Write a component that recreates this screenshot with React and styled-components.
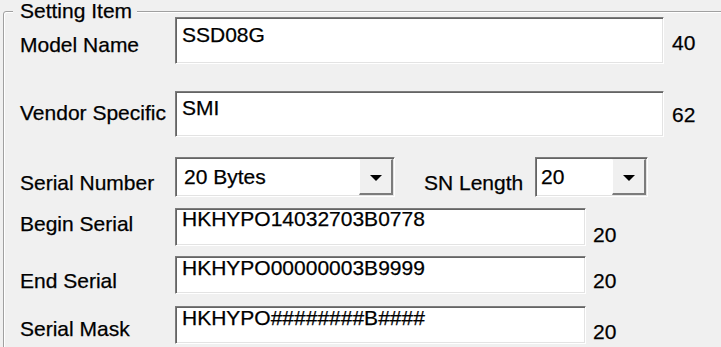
import React from "react";
import styled, { createGlobalStyle } from "styled-components";

const GlobalStyle = createGlobalStyle`
  html, body {
    margin: 0;
    padding: 0;
    background: #f0f0f0;
    overflow: hidden;
  }
  body {
    font-family: "Liberation Sans", Arial, sans-serif;
    font-size: 21px;
    color: #000;
    -webkit-text-stroke: 0.25px #000;
  }
`;

const Page = styled.div`
  width: 721px;
  height: 347px;
  overflow: hidden;
  background: #f0f0f0;
`;

const GroupBox = styled.section`
  position: relative;
  width: 760px;
  height: 360px;
  margin: 11px 0 0 3px;
  border: 1px solid #a0a0a0;
  border-radius: 3px;
  box-shadow: inset 1px 1px 0 #ffffff;
  padding: 5px 0 0 16px;
  box-sizing: border-box;
`;

// caption sits over the group box line
const Caption = styled.span`
  position: absolute;
  top: -13px;
  left: 9px;
  padding: 0 5px 0 7px;
  line-height: 24px;
  background: #f0f0f0;
  white-space: nowrap;
`;

const Row = styled.div`
  display: flex;
  align-items: flex-start;
  margin-top: ${(p) => p.$gap || 0}px;
`;

const Label = styled.span`
  flex: none;
  width: ${(p) => p.$width || 155}px;
  margin-left: ${(p) => p.$left || 0}px;
  margin-top: ${(p) => p.$dy}px;
  line-height: 24px;
  white-space: nowrap;
`;

const Count = styled.span`
  margin-left: ${(p) => p.$left}px;
  margin-top: ${(p) => p.$dy}px;
  line-height: 24px;
`;

const Edit = styled.div`
  flex: none;
  box-sizing: border-box;
  width: ${(p) => p.$width}px;
  height: ${(p) => p.$height}px;
  padding: ${(p) => p.$padTop}px 6px 0 6px;
  background: #fff;
  border: 1px solid;
  border-color: #7c7c7c #ffffff #ffffff #7c7c7c;
  box-shadow: inset 1px 1px 0 #646464, inset -1px -1px 0 #e3e3e3;
  line-height: 20px;
  white-space: nowrap;
  overflow: hidden;
`;

const Combo = styled.div`
  flex: none;
  display: flex;
  box-sizing: border-box;
  width: ${(p) => p.$width}px;
  height: 40px;
  border: 1px solid;
  border-color: #7c7c7c #ffffff #ffffff #7c7c7c;
  box-shadow: inset 1px 1px 0 #646464, inset -1px -1px 0 #e3e3e3;
  background: #fff;
`;

const ComboValue = styled.div`
  flex: 1;
  padding: 8px 0 0 ${(p) => p.$indent}px;
  line-height: 20px;
  margin: 1px 0 1px 1px;
  white-space: nowrap;
`;

const DropButton = styled.div`
  flex: none;
  width: 34px;
  margin: 1px 1px 1px 0;
  box-sizing: border-box;
  display: flex;
  align-items: center;
  justify-content: center;
  background: #f0f0f0;
  border-left: 1px solid #ffffff;
  border-top: 1px solid #f0f0f0;
  border-right: 2px solid #7c7c7c;
  border-bottom: 2px solid #7c7c7c;
`;

const Arrow = styled.span`
  width: 0;
  height: 0;
  border-left: 6px solid transparent;
  border-right: 6px solid transparent;
  border-top: 6px solid #000;
  margin-top: 2px;
`;

function ComboBox({ value, width, indent }) {
  return (
    <Combo $width={width}>
      <ComboValue $indent={indent}>{value}</ComboValue>
      <DropButton>
        <Arrow />
      </DropButton>
    </Combo>
  );
}

export default function App() {
  return (
    <Page>
      <GlobalStyle />
      <GroupBox>
        <Caption>Setting Item</Caption>

        <Row>
          <Label $dy={16}>Model Name</Label>
          <Edit $width={489} $height={47} $padTop={7}>SSD08G</Edit>
          <Count $left={8} $dy={14}>40</Count>
        </Row>

        <Row $gap={27}>
          <Label $dy={10}>Vendor Specific</Label>
          <Edit $width={489} $height={46} $padTop={6}>SMI</Edit>
          <Count $left={8} $dy={12}>62</Count>
        </Row>

        <Row $gap={20}>
          <Label $dy={14}>Serial Number</Label>
          <ComboBox value="20 Bytes" width={220} indent={7} />
          <Label $dy={14} $left={29} $width={111}>SN Length</Label>
          <ComboBox value="20" width={113} indent={4} />
        </Row>

        <Row $gap={11}>
          <Label $dy={4}>Begin Serial</Label>
          <Edit $width={411} $height={38} $padTop={0}>HKHYPO14032703B0778</Edit>
          <Count $left={7} $dy={15}>20</Count>
        </Row>

        <Row $gap={9}>
          <Label $dy={13}>End Serial</Label>
          <Edit $width={411} $height={38} $padTop={1}>HKHYPO00000003B9999</Edit>
          <Count $left={7} $dy={13}>20</Count>
        </Row>

        <Row $gap={12}>
          <Label $dy={11}>Serial Mask</Label>
          <Edit $width={411} $height={38} $padTop={1}>HKHYPO########B####</Edit>
          <Count $left={7} $dy={14}>20</Count>
        </Row>
      </GroupBox>
    </Page>
  );
}
